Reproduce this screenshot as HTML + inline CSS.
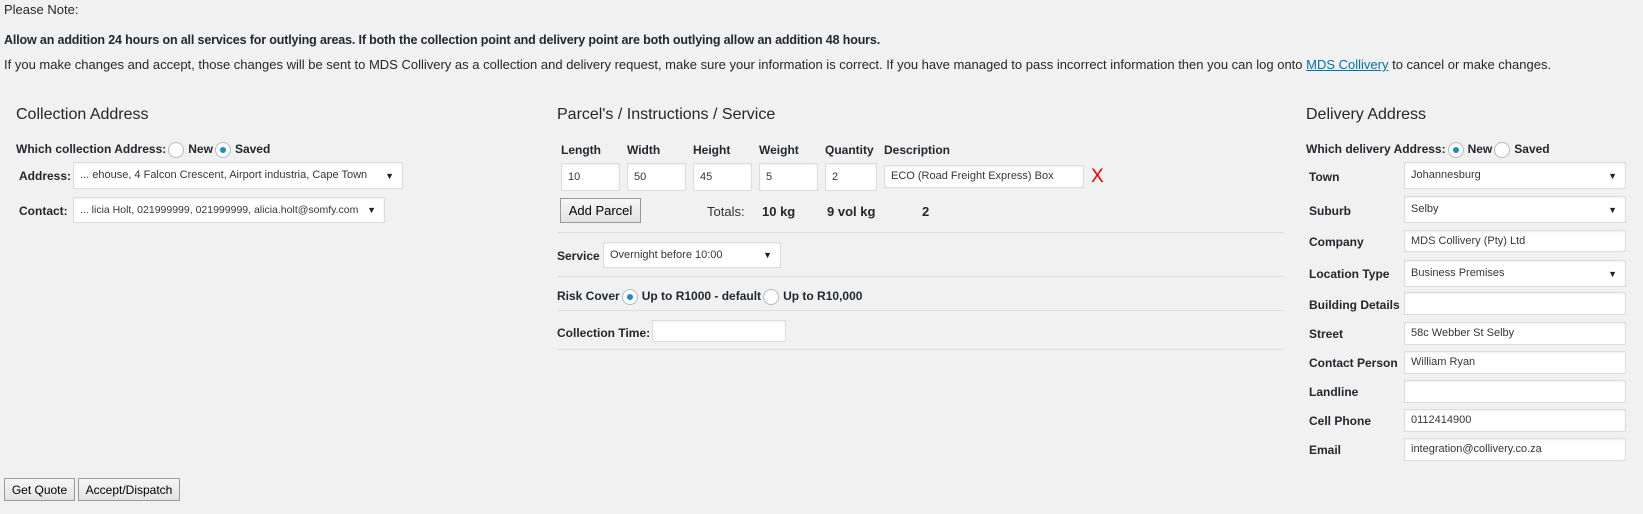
<!DOCTYPE html>
<html><head><meta charset="utf-8"><style>
*{box-sizing:border-box;margin:0;padding:0}
body{width:1643px;height:514px;background:#f1f1f1;font-family:"Liberation Sans",sans-serif;color:#23282d;position:relative;overflow:hidden;font-size:13px}
.a{position:absolute;white-space:nowrap}
.b{font-weight:bold}
.h{font-size:16px;color:#23282d}
.in{position:absolute;background:#fff;border:1px solid #ddd;box-shadow:inset 0 1px 2px rgba(0,0,0,.07);font-size:11px;line-height:13px;color:#32373c;padding-left:6px;display:flex;align-items:center;white-space:nowrap;overflow:hidden}
.sel::after{content:"▼";position:absolute;right:8px;top:50%;margin-top:-6px;font-size:9px;color:#222}
.hr{position:absolute;height:1px;background:#ddd;left:557px;width:727px}
.rad{display:inline-block;width:16px;height:16px;border:1px solid #b4b9be;border-radius:50%;background:#fff;vertical-align:middle;position:relative;margin:0 4px 0 2px}
.rad.on::after{content:"";position:absolute;left:4px;top:4px;width:6px;height:6px;border-radius:50%;background:#1e8cbe}
.btn{position:absolute;border:1px solid #999;font-size:13px;display:flex;align-items:center;justify-content:center;color:#000;background:linear-gradient(#f6f6f6,#e3e3e3)}
.lab{position:absolute;font-weight:bold;font-size:12px;white-space:nowrap}
</style></head><body>
<div class="a" style="left:4px;top:2px">Please Note:</div>
<div class="a b" style="left:4px;top:33px;font-size:12.5px;letter-spacing:-0.15px">Allow an addition 24 hours on all services for outlying areas. If both the collection point and delivery point are both outlying allow an addition 48 hours.</div>
<div class="a" style="left:4px;top:57px">If you make changes and accept, those changes will be sent to MDS Collivery as a collection and delivery request, make sure your information is correct. If you have managed to pass incorrect information then you can log onto <span style="color:#0073aa;text-decoration:underline">MDS Collivery</span> to cancel or make changes.</div>

<div class="a h" style="left:16px;top:106px">Collection Address</div>
<div class="a h" style="left:557px;top:106px">Parcel's / Instructions / Service</div>
<div class="a h" style="left:1306px;top:106px">Delivery Address</div>

<div class="a b" style="left:16px;top:141px;font-size:12px;line-height:16px">Which collection Address:<span class="rad"></span>New<span class="rad on"></span>Saved</div>
<div class="lab" style="left:19px;top:169px">Address:</div>
<div class="in sel" style="left:73px;top:162px;width:330px;height:27px">... ehouse, 4 Falcon Crescent, Airport industria, Cape Town</div>
<div class="lab" style="left:19px;top:204px">Contact:</div>
<div class="in sel" style="left:73px;top:197px;width:312px;height:26px;font-size:10.5px">... licia Holt, 021999999, 021999999, alicia.holt@somfy.com</div>

<div class="lab" style="left:561px;top:143px">Length</div>
<div class="lab" style="left:627px;top:143px">Width</div>
<div class="lab" style="left:693px;top:143px">Height</div>
<div class="lab" style="left:759px;top:143px">Weight</div>
<div class="lab" style="left:825px;top:143px">Quantity</div>
<div class="lab" style="left:884px;top:143px">Description</div>
<div class="in" style="left:561px;top:163px;width:59px;height:28px">10</div>
<div class="in" style="left:627px;top:163px;width:59px;height:28px">50</div>
<div class="in" style="left:693px;top:163px;width:59px;height:28px">45</div>
<div class="in" style="left:759px;top:163px;width:59px;height:28px">5</div>
<div class="in" style="left:825px;top:163px;width:52px;height:28px">2</div>
<div class="in" style="left:884px;top:165px;width:200px;height:23px">ECO (Road Freight Express) Box</div>
<div class="a" style="left:1091px;top:166px;color:#e00;font-size:19px;line-height:22px">X</div>
<div class="btn" style="left:560px;top:198px;width:81px;height:25px;font-size:13px">Add Parcel</div>
<div class="a" style="left:707px;top:204px;font-size:13px;color:#333">Totals:</div>
<div class="a b" style="left:762px;top:204px">10 kg</div>
<div class="a b" style="left:827px;top:204px">9 vol kg</div>
<div class="a b" style="left:922px;top:204px">2</div>
<div class="hr" style="top:232px"></div>
<div class="lab" style="left:557px;top:249px">Service</div>
<div class="in sel" style="left:603px;top:242px;width:178px;height:26px">Overnight before 10:00</div>
<div class="hr" style="top:276px"></div>
<div class="a b" style="left:557px;top:288px;font-size:12px;line-height:16px">Risk Cover<span class="rad on"></span>Up to R1000 - default<span class="rad"></span>Up to R10,000</div>
<div class="hr" style="top:310px"></div>
<div class="lab" style="left:557px;top:326px">Collection Time:</div>
<div class="in" style="left:652px;top:320px;width:134px;height:22px"></div>
<div class="hr" style="top:349px"></div>

<div class="a b" style="left:1306px;top:141px;font-size:12px;line-height:16px">Which delivery Address:<span class="rad on"></span>New<span class="rad"></span>Saved</div>
<div class="lab" style="left:1309px;top:170px">Town</div>
<div class="in sel" style="left:1404px;top:162px;width:222px;height:27px">Johannesburg</div>
<div class="lab" style="left:1309px;top:204px">Suburb</div>
<div class="in sel" style="left:1404px;top:196px;width:222px;height:27px">Selby</div>
<div class="lab" style="left:1309px;top:235px">Company</div>
<div class="in" style="left:1404px;top:230px;width:222px;height:22px">MDS Collivery (Pty) Ltd</div>
<div class="lab" style="left:1309px;top:267px">Location Type</div>
<div class="in sel" style="left:1404px;top:260px;width:222px;height:27px">Business Premises</div>
<div class="lab" style="left:1309px;top:298px">Building Details</div>
<div class="in" style="left:1404px;top:292px;width:222px;height:23px"></div>
<div class="lab" style="left:1309px;top:327px">Street</div>
<div class="in" style="left:1404px;top:322px;width:222px;height:23px">58c Webber St Selby</div>
<div class="lab" style="left:1309px;top:356px">Contact Person</div>
<div class="in" style="left:1404px;top:351px;width:222px;height:23px">William Ryan</div>
<div class="lab" style="left:1309px;top:385px">Landline</div>
<div class="in" style="left:1404px;top:380px;width:222px;height:23px"></div>
<div class="lab" style="left:1309px;top:414px">Cell Phone</div>
<div class="in" style="left:1404px;top:409px;width:222px;height:23px">0112414900</div>
<div class="lab" style="left:1309px;top:443px">Email</div>
<div class="in" style="left:1404px;top:438px;width:222px;height:23px">integration@collivery.co.za</div>

<div class="btn" style="left:4px;top:478px;width:71px;height:23px;font-size:12px">Get Quote</div>
<div class="btn" style="left:78px;top:478px;width:102px;height:23px;font-size:12px">Accept/Dispatch</div>
</body></html>
